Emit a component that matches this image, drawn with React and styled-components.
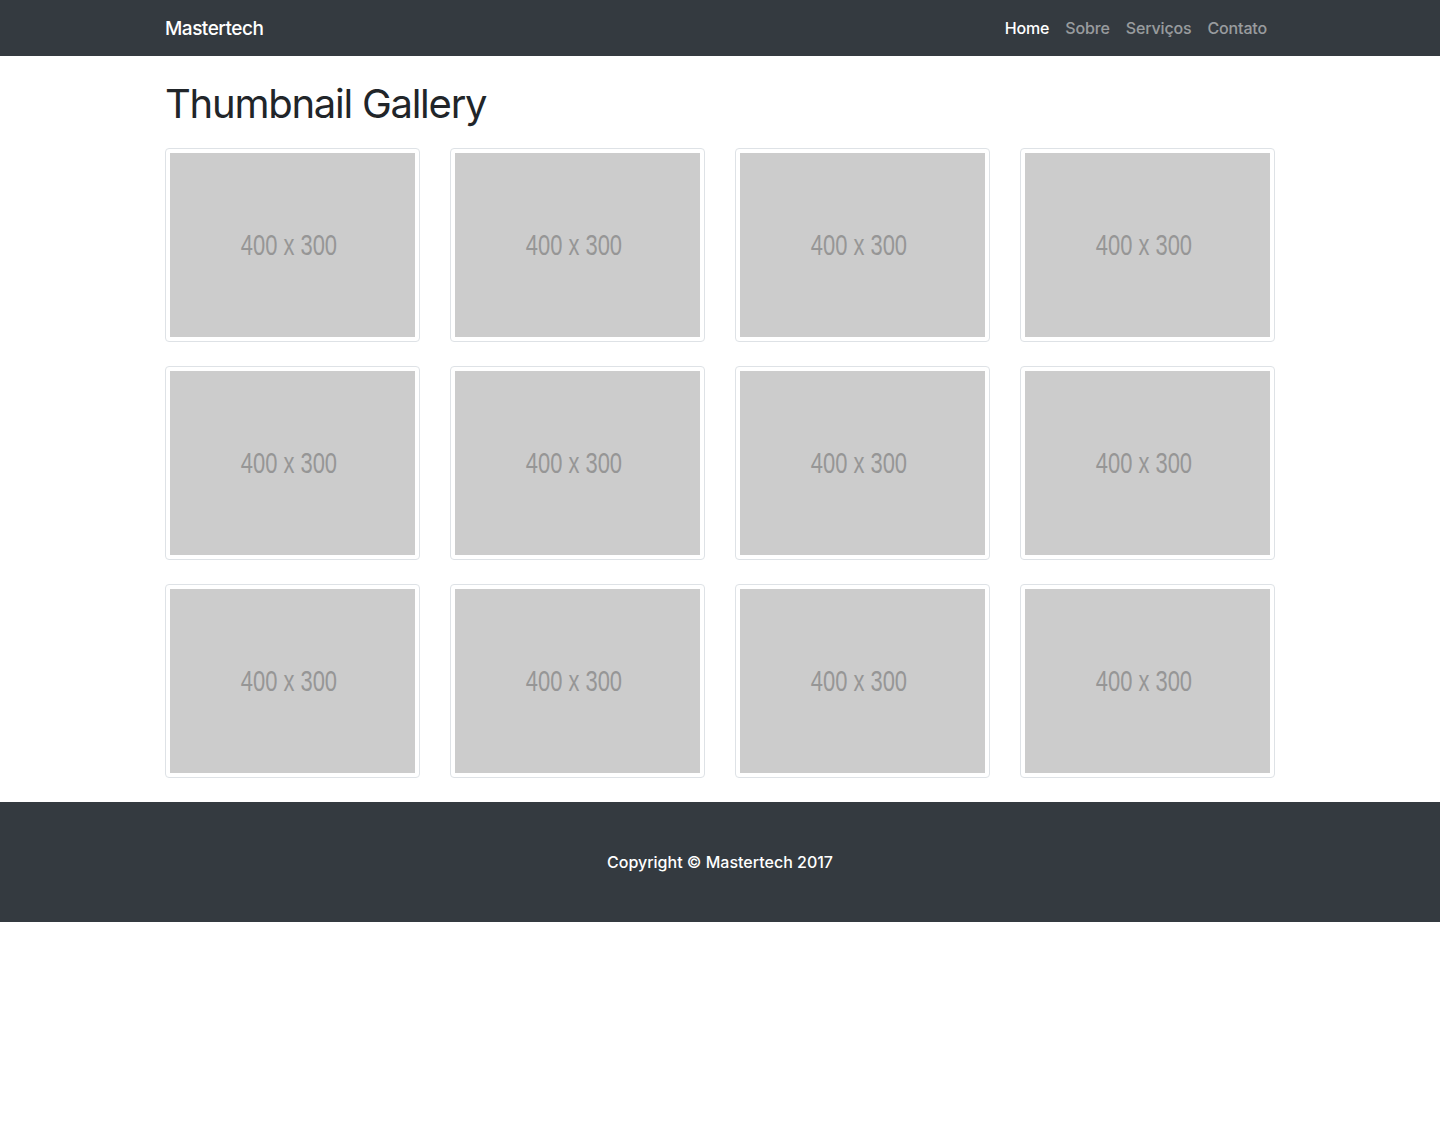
import React from 'react'
import styled, { createGlobalStyle } from 'styled-components'

const GlobalStyle = createGlobalStyle`
  body {
    margin: 0;
    font-family: Inter, "Noto Sans", sans-serif;
    color: #212529;
    background: #fff;
  }
`;

const navLinks = [
  { label: 'Home', active: true },
  { label: 'Sobre' },
  { label: 'Serviços' },
  { label: 'Contato' },
];

const thumbs = Array.from({ length: 12 }, (_, i) => i);

const App = () => {
  return (
    <>
      <GlobalStyle />
      <NavBar>
        <Container>
          <NavInner>
            <Brand href="#">Mastertech</Brand>
            <NavList>
              {navLinks.map(link => (
                <NavLink key={link.label} href="#" $active={link.active}>
                  {link.label}
                </NavLink>
              ))}
            </NavList>
          </NavInner>
        </Container>
      </NavBar>

      <Container>
        <Title>Thumbnail Gallery</Title>
        <Grid>
          {thumbs.map(i => (
            <Thumb key={i} href="#">
              <Placeholder>
                <PlaceholderText>400 x 300</PlaceholderText>
              </Placeholder>
            </Thumb>
          ))}
        </Grid>
      </Container>

      <Footer>
        <Container>
          <Copyright>Copyright © Mastertech 2017</Copyright>
        </Container>
      </Footer>
    </>
  )
}

export default App

const Container = styled.div`
  width: 1110px;
  margin: 0 auto;
`;

const NavBar = styled.nav`
  background: #343a40;
  height: 56px;
`;

const NavInner = styled.div`
  height: 56px;
  display: flex;
  align-items: center;
  justify-content: space-between;
`;

const Brand = styled.a`
  color: #fff;
  font-size: 19px;
  font-weight: 500;
  letter-spacing: -0.5px;
  text-decoration: none;
`;

const NavList = styled.div`
  display: flex;
  margin-right: 8px;
`;

const NavLink = styled.a`
  padding: 0 8px;
  font-size: 16px;
  font-weight: 500;
  letter-spacing: -0.15px;
  color: ${p => (p.$active ? '#fff' : 'rgba(255,255,255,0.5)')};
  text-decoration: none;
  &:last-child { padding-right: 0; }
`;

const Title = styled.h1`
  margin: 24px 0 20px;
  font-size: 40px;
  line-height: 48px;
  font-weight: 400;
  letter-spacing: -1.25px;
`;

const Grid = styled.div`
  display: grid;
  grid-template-columns: repeat(4, 255px);
  column-gap: 30px;
  row-gap: 24px;
  padding-bottom: 24px;
`;

const Thumb = styled.a`
  display: block;
  padding: 4px;
  border: 1px solid #dee2e6;
  border-radius: 4px;
  background: #fff;
  text-decoration: none;
`;

const Placeholder = styled.div`
  height: 184px;
  background: #cccccc;
  display: flex;
  align-items: center;
  justify-content: center;
`;

const PlaceholderText = styled.span`
  margin-right: 7px;
  color: #969696;
  font-family: "Liberation Sans", Arial, sans-serif;
  font-size: 30px;
  transform: scaleX(0.73);
  white-space: nowrap;
`;

const Footer = styled.footer`
  background: #343a40;
  padding: 48px 0;
`;

const Copyright = styled.p`
  margin: 0;
  text-align: center;
  color: #fff;
  font-size: 16px;
  font-weight: 500;
  line-height: 24px;
`;
